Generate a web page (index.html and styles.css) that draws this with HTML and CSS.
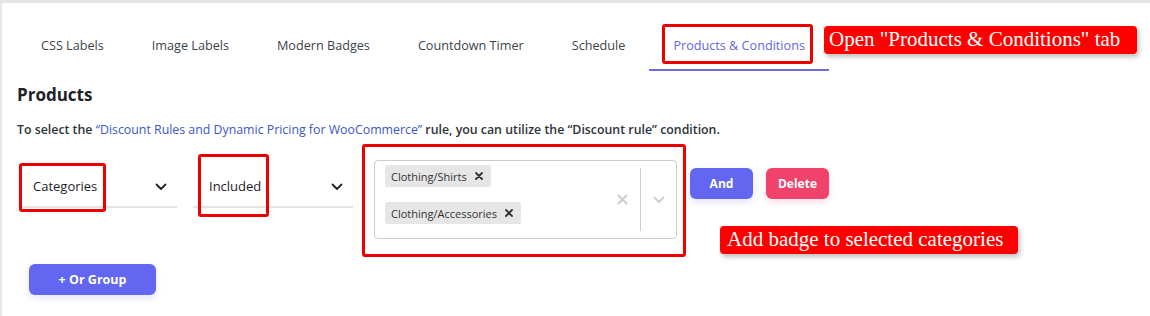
FILE: index.html
```html
<!DOCTYPE html>
<html>
<head>
<meta charset="utf-8">
<link rel="stylesheet" href="styles.css">
</head>
<body>
<div class="panel">
  <nav class="tabs">
    <div class="tab">CSS Labels</div>
    <div class="tab">Image Labels</div>
    <div class="tab">Modern Badges</div>
    <div class="tab">Countdown Timer</div>
    <div class="tab">Schedule</div>
    <div class="tab active">Products &amp; Conditions</div>
  </nav>
  <section class="content">
    <h2 class="title">Products</h2>
    <p class="desc"><span class="strong">To select the</span> <a class="link">“Discount Rules and Dynamic Pricing for WooCommerce”</a> <span class="strong">rule, you can utilize the “Discount rule” condition.</span></p>
    <div class="rule-row">
      <div class="select sel-type">
        <span>Categories</span>
        <svg class="chev" width="12" height="8" viewBox="0 0 12 8"><path d="M1.5 1.5 L6 6 L10.5 1.5" fill="none" stroke="#1d2327" stroke-width="1.8" stroke-linecap="round" stroke-linejoin="round"/></svg>
      </div>
      <div class="select sel-op">
        <span>Included</span>
        <svg class="chev" width="12" height="8" viewBox="0 0 12 8"><path d="M1.5 1.5 L6 6 L10.5 1.5" fill="none" stroke="#1d2327" stroke-width="1.8" stroke-linecap="round" stroke-linejoin="round"/></svg>
      </div>
      <div class="multi">
        <div class="tags">
          <span class="tag">Clothing/Shirts <svg class="tag-x" width="8" height="8" viewBox="0 0 8 8"><path d="M1 1 L7 7 M7 1 L1 7" stroke="#333" stroke-width="1.8" stroke-linecap="round"/></svg></span>
          <span class="tag">Clothing/Accessories <svg class="tag-x" width="8" height="8" viewBox="0 0 8 8"><path d="M1 1 L7 7 M7 1 L1 7" stroke="#333" stroke-width="1.8" stroke-linecap="round"/></svg></span>
        </div>
        <div class="indicators">
          <svg class="clear" width="11" height="11" viewBox="0 0 11 11"><path d="M1.5 1.5 L9.5 9.5 M9.5 1.5 L1.5 9.5" stroke="#cccccc" stroke-width="2" stroke-linecap="round"/></svg>
          <span class="sep"></span>
          <svg class="drop" width="12" height="8" viewBox="0 0 12 8"><path d="M1.5 1.5 L6 6 L10.5 1.5" fill="none" stroke="#cccccc" stroke-width="1.8" stroke-linecap="round" stroke-linejoin="round"/></svg>
        </div>
      </div>
      <button class="btn btn-and">And</button>
      <button class="btn btn-del">Delete</button>
    </div>
    <button class="btn btn-or">+ Or Group</button>
  </section>

  <div class="hl hl-tab"></div>
  <div class="hl hl-cat"></div>
  <div class="hl hl-inc"></div>
  <div class="hl hl-multi"></div>
  <div class="note note-tab">Open "Products &amp; Conditions" tab</div>
  <div class="note note-badge">Add badge to selected categories</div>
</div>
</body>
</html>
```

FILE: styles.css
```css
* { box-sizing: border-box; }
html, body { margin: 0; padding: 0; background: #fff; }
body {
  font-family: "Open Sans", "Noto Sans", "Liberation Sans", sans-serif;
  color: #1d2327;
  width: 1150px;
  height: 316px;
  overflow: hidden;
}
.panel {
  position: relative;
  height: 316px;
  border-top: 3px solid #e6e6e6;
  border-left: 2px solid #e8e8e8;
}
.tabs {
  display: flex;
  padding: 17px 0 0 15px;
}
.tab {
  padding: 16px 24px 15px;
  line-height: 18px;
  font-size: 12.65px;
  font-weight: 500;
  color: #3c434a;
  border-bottom: 2px solid transparent;
  white-space: nowrap;
}
.tab.active {
  color: #6466e0;
  border-bottom-color: #6c6cdc;
}
.content {
  padding: 0 0 0 15px;
}
.title {
  margin: 13px 0 0;
  font-size: 17px;
  line-height: 22px;
  font-weight: 700;
  color: #1d2327;
}
.desc {
  margin: 15px 0 0;
  font-size: 12.35px;
  line-height: 18px;
  color: #2c3338;
  white-space: nowrap;
}
.strong { font-weight: 600; }
.link { color: #3a56c8; }
.rule-row {
  display: flex;
  align-items: flex-start;
  margin-top: 21px;
  padding-left: 2px;
}
.select {
  display: flex;
  align-items: flex-start;
  justify-content: space-between;
  padding: 17px 10px 11px 14px;
  height: 48px;
  border-bottom: 2px solid #e4e4e4;
  font-size: 13px;
  line-height: 18px;
  color: #1d2327;
}
.sel-type { width: 158px; }
.sel-op { width: 160px; margin-left: 16px; padding-left: 16px; }
.chev { margin-top: 6px; }
.multi {
  display: flex;
  width: 303px;
  height: 79px;
  margin-left: 21px;
  border: 1px solid #cccccc;
  border-radius: 4px;
}
.tags {
  flex: 1;
  display: flex;
  flex-direction: column;
  align-items: flex-start;
  gap: 15px;
  padding: 4px 0 0 10px;
}
.tag {
  display: inline-flex;
  align-items: center;
  height: 22px;
  padding: 0 8px 0 6px;
  background: #e6e6e6;
  border-radius: 2px;
  font-size: 11px;
  color: #333;
}
.tag-x {
  margin-left: 8px;
}
.indicators {
  display: flex;
  align-items: center;
  padding: 7px 0;
}
.clear { margin-right: 12px; }
.sep {
  align-self: stretch;
  width: 1px;
  background: #cccccc;
}
.drop { margin: 0 11px 0 12px; }
.btn {
  border: 0;
  border-radius: 6px;
  color: #fff;
  font-family: inherit;
  font-weight: 700;
  font-size: 12px;
  height: 31px;
  cursor: pointer;
  box-shadow: 0 3px 6px rgba(99, 102, 241, 0.18);
}
.btn-and {
  width: 63px;
  margin: 8px 0 0 13px;
  background: #6366f1;
}
.btn-del {
  width: 63px;
  margin: 8px 0 0 13px;
  background: #f0426a;
  box-shadow: 0 3px 6px rgba(240, 66, 106, 0.18);
}
.btn-or {
  display: block;
  width: 127px;
  margin: 25px 0 0 12px;
  background: #6366f1;
  font-size: 12.5px;
}
.hl {
  position: absolute;
  border: 3px solid #ee0000;
  border-radius: 3px;
}
.hl-tab { left: 660px; top: 21px; width: 151px; height: 40px; }
.hl-cat { left: 17px; top: 160px; width: 87px; height: 49px; }
.hl-inc { left: 196px; top: 151px; width: 71px; height: 63px; }
.hl-multi { left: 360px; top: 141px; width: 324px; height: 113px; }
.note {
  position: absolute;
  background: #ff0000;
  color: #fff;
  font-family: "Liberation Serif", "Times New Roman", serif;
  font-size: 21px;
  line-height: 27px;
  padding: 0 0 0 5px;
  border-radius: 4px;
  box-shadow: 2px 3px 5px rgba(0,0,0,0.25);
  white-space: nowrap;
}
.note-tab { left: 822px; top: 23px; width: 313px; height: 28px; }
.note-badge { left: 718px; top: 223px; width: 298px; height: 28px; padding-left: 7px; }
```
